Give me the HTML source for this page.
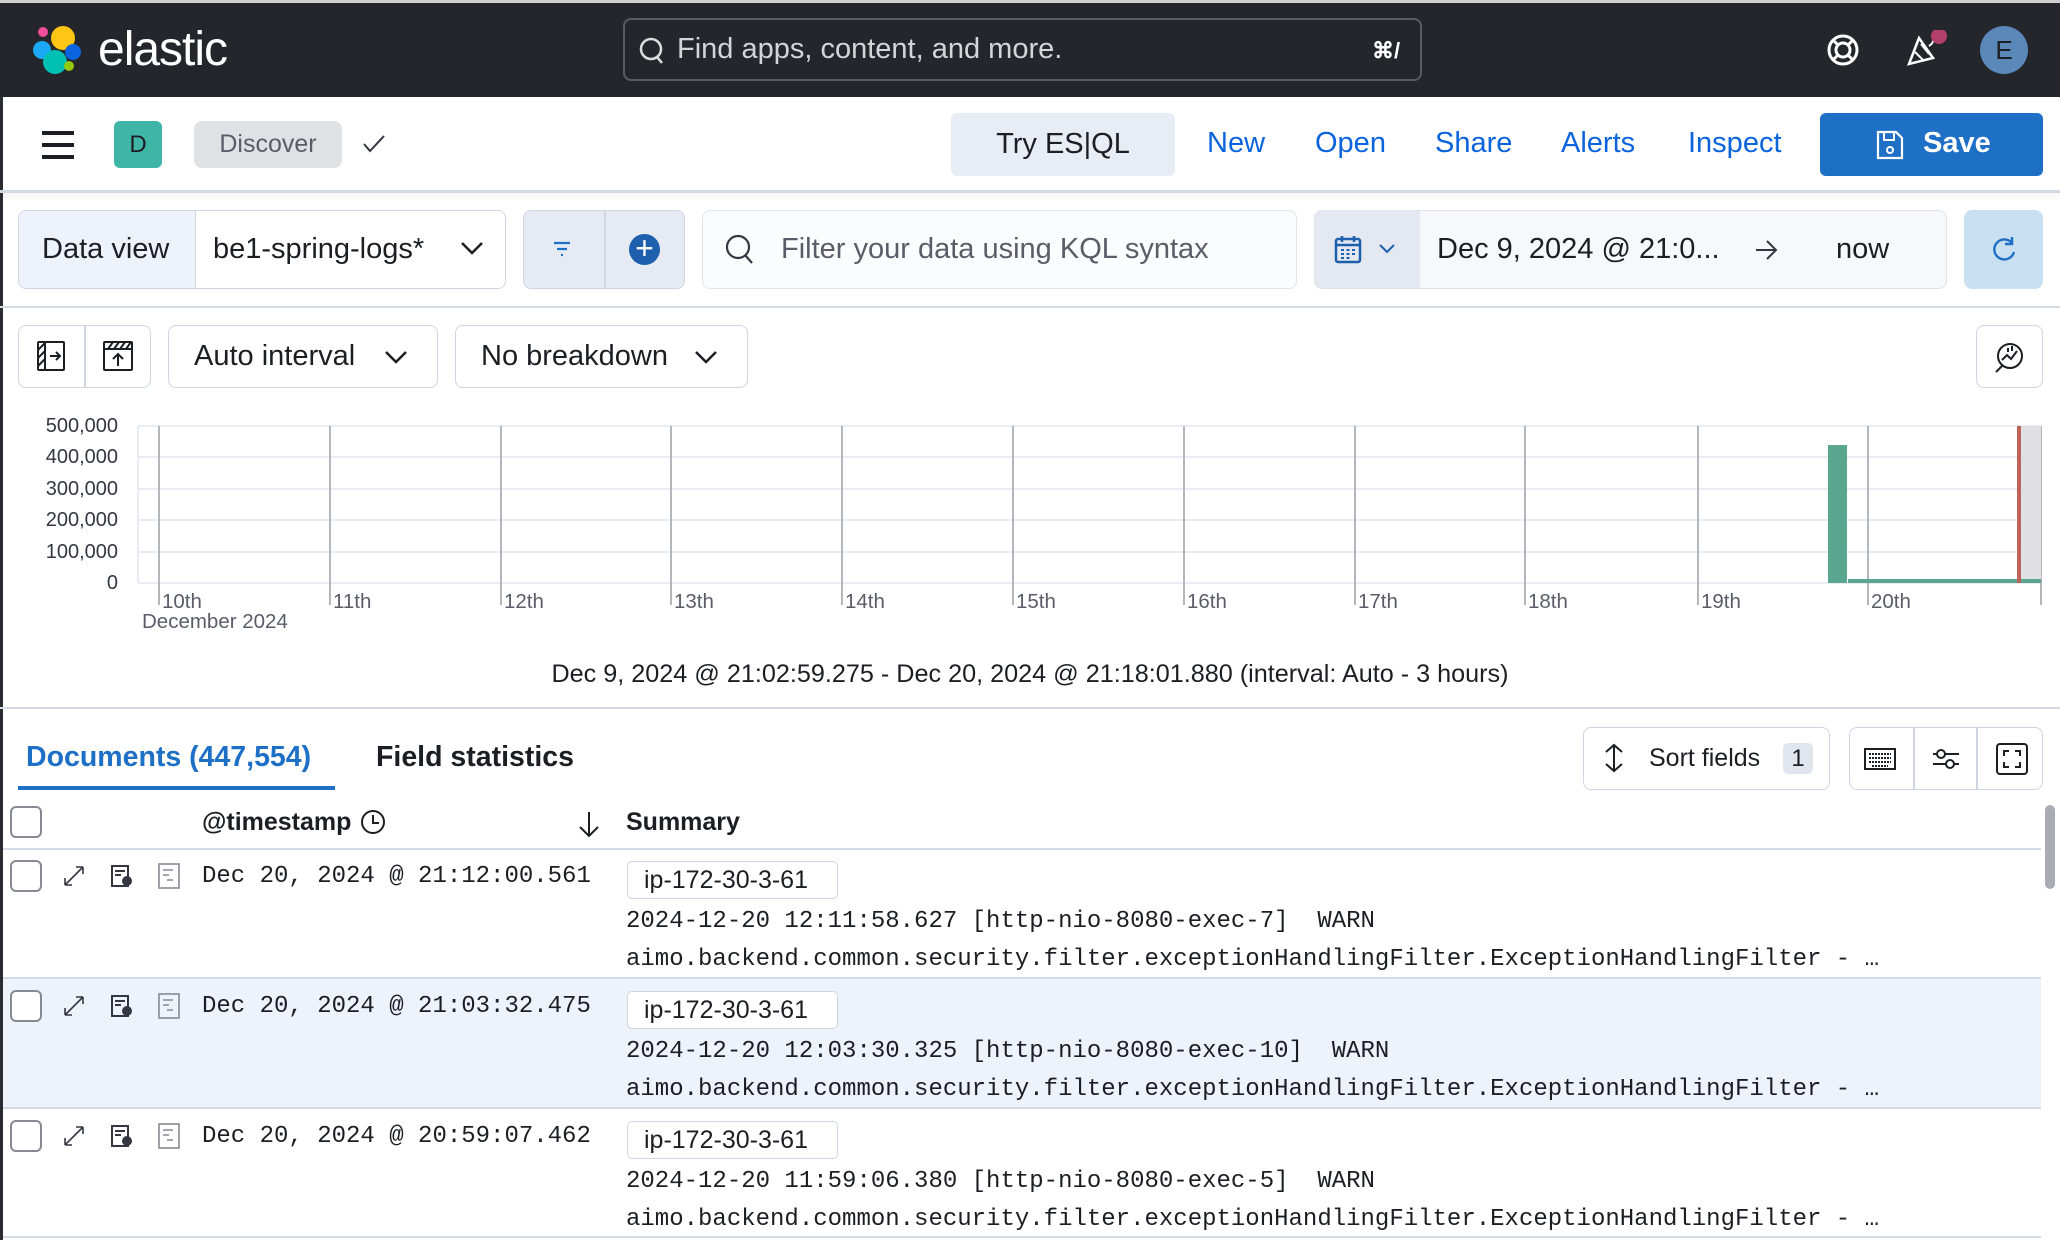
<!DOCTYPE html>
<html><head><meta charset="utf-8"><style>
*{box-sizing:border-box;margin:0;padding:0}
body{width:2060px;height:1240px;overflow:hidden;background:#fff;font-family:"Liberation Sans",sans-serif;color:#1d1e24;position:relative}
.a{position:absolute}
.t{position:absolute;white-space:pre}
.mono{font-family:"Liberation Mono",monospace}
.btn{position:absolute;border:1.5px solid #cfd5e2;border-radius:8px;background:#fff}
</style></head><body>
<!-- header -->
<div class="a" style="left:0;top:0;width:2060px;height:97px;background:#25262c;border-top:3px solid #d0d0d0"></div>
<svg class="a" style="left:33px;top:24px" width="50" height="52" viewBox="0 0 50 52">
<circle cx="30" cy="14" r="12" fill="#fec514"/><circle cx="10" cy="8" r="5" fill="#f04e98"/>
<circle cx="9" cy="26" r="9" fill="#1ba9f5"/><circle cx="40" cy="28" r="8" fill="#0b64dd"/>
<circle cx="22" cy="38" r="12" fill="#00bfb3"/><circle cx="36" cy="42" r="5" fill="#93c90e"/></svg>
<div class="t" style="left:98px;top:22px;font-size:48px;color:#fff;letter-spacing:-1px">elastic</div>
<div class="a" style="left:623px;top:18px;width:799px;height:63px;border:2px solid #5a5c63;border-radius:8px"></div>
<svg class="a" style="left:638px;top:36px" width="28" height="30" viewBox="0 0 28 30"><circle cx="13" cy="13" r="10" stroke="#ddd" stroke-width="2.5" fill="none"/><path d="M19 21l5 6" stroke="#ddd" stroke-width="2.5"/></svg>
<div class="t" style="left:677px;top:33px;font-size:29px;color:#d4d5d9">Find apps, content, and more.</div>
<div class="t" style="left:1372px;top:38px;font-size:22px;color:#fff;font-weight:bold">⌘/</div>
<svg class="a" style="left:1826px;top:33px" width="34" height="34" viewBox="0 0 34 34"><circle cx="17" cy="17" r="14" stroke="#fff" stroke-width="3" fill="none"/><circle cx="17" cy="17" r="7" stroke="#fff" stroke-width="3" fill="none"/><path d="M7 7l5 5M27 7l-5 5M7 27l5-5M27 27l-5-5" stroke="#fff" stroke-width="3"/></svg>
<svg class="a" style="left:1905px;top:30px" width="44" height="40" viewBox="0 0 44 40"><path d="M4 34L14 8l14 20z" stroke="#fff" stroke-width="2.5" fill="none"/><path d="M10 22l8 8M16 14l8 10" stroke="#fff" stroke-width="2"/><path d="M24 16q6-4 4-10" stroke="#fff" stroke-width="2" fill="none"/><circle cx="34" cy="6" r="8" fill="#b2416a"/></svg>
<div class="a" style="left:1980px;top:26px;width:48px;height:48px;border-radius:50%;background:#5a88b8;color:#1d1e24;font-size:26px;text-align:center;line-height:48px">E</div>
<!-- nav bar -->
<div class="a" style="left:0;top:97px;width:3px;height:1143px;background:#2b2c31"></div>
<div class="a" style="left:0;top:190px;width:2060px;height:3px;background:#d3dae6;box-shadow:0 3px 6px rgba(0,0,0,.08)"></div>
<div class="a" style="left:42px;top:131px;width:32px;height:4px;background:#1d1e24;box-shadow:0 12px 0 #1d1e24,0 24px 0 #1d1e24"></div>
<div class="a" style="left:114px;top:121px;width:48px;height:47px;border-radius:6px;background:#3fb5a7;font-size:24px;text-align:center;line-height:47px">D</div>
<div class="a" style="left:194px;top:121px;width:148px;height:47px;border-radius:8px;background:#e0e1e4;color:#5a5d68;font-size:25px;text-align:center;line-height:47px">Discover</div>
<svg class="a" style="left:362px;top:134px" width="24" height="20"><path d="M2 10l6 7L22 2" stroke="#343741" stroke-width="2" fill="none"/></svg>
<div class="a" style="left:951px;top:113px;width:224px;height:63px;border-radius:6px;background:#e8ecf4;font-size:29px;text-align:center;line-height:63px">Try ES|QL</div>
<div class="t" style="left:1207px;top:127px;font-size:29px;color:#0b64dd">New</div>
<div class="t" style="left:1315px;top:127px;font-size:29px;color:#0b64dd">Open</div>
<div class="t" style="left:1435px;top:127px;font-size:29px;color:#0b64dd">Share</div>
<div class="t" style="left:1561px;top:127px;font-size:29px;color:#0b64dd">Alerts</div>
<div class="t" style="left:1688px;top:127px;font-size:29px;color:#0b64dd">Inspect</div>
<div class="a" style="left:1820px;top:113px;width:223px;height:63px;border-radius:6px;background:#1e6fc6"></div>
<svg class="a" style="left:1876px;top:130px" width="28" height="30" viewBox="0 0 28 30"><path d="M2 2h18l6 6v20H2z" stroke="#fff" stroke-width="2.2" fill="none"/><path d="M8 2v8h10V2" stroke="#fff" stroke-width="2" fill="none"/><circle cx="14" cy="20" r="3" stroke="#fff" stroke-width="2" fill="none"/></svg>
<div class="t" style="left:1923px;top:127px;font-size:29px;color:#fff;font-weight:bold">Save</div>
<!-- query row -->
<div class="btn" style="left:18px;top:210px;width:488px;height:79px;overflow:hidden"><div class="a" style="left:0;top:0;width:177px;height:100%;background:#eef2fa;border-right:1.5px solid #cfd5e2"></div></div>
<div class="t" style="left:42px;top:233px;font-size:29px">Data view</div>
<div class="t" style="left:213px;top:233px;font-size:29px">be1-spring-logs*</div>
<svg class="a" style="left:460px;top:240px" width="24" height="16"><path d="M2 3l10 10L22 3" stroke="#1d1e24" stroke-width="2.5" fill="none"/></svg>
<div class="btn" style="left:523px;top:210px;width:162px;height:79px;background:#e6ebf3"><div class="a" style="left:80px;top:0;width:1.5px;height:100%;background:#cfd5e2"></div></div>
<svg class="a" style="left:552px;top:240px" width="22" height="18"><path d="M2 3h16M5 9h10M9 15h2" stroke="#1e6fc6" stroke-width="2.2"/></svg>
<div class="a" style="left:629px;top:234px;width:31px;height:31px;border-radius:50%;background:#1e5fae"></div>
<div class="t" style="left:629px;top:229px;width:31px;text-align:center;font-size:32px;color:#fff;line-height:38px">+</div>
<div class="btn" style="left:702px;top:210px;width:595px;height:79px;background:#fbfcfd;border-color:#e0e4ec"></div>
<svg class="a" style="left:724px;top:233px" width="32" height="34"><circle cx="14" cy="14" r="11" stroke="#343741" stroke-width="2.2" fill="none"/><path d="M21 22l7 8" stroke="#343741" stroke-width="2.2"/></svg>
<div class="t" style="left:781px;top:233px;font-size:29px;color:#5a5d68">Filter your data using KQL syntax</div>
<div class="btn" style="left:1314px;top:210px;width:633px;height:79px;background:#f7f8fc;border-color:#dfe3ea;overflow:hidden"><div class="a" style="left:0;top:0;width:105px;height:100%;background:#e3e8f1"></div></div>
<svg class="a" style="left:1334px;top:234px" width="28" height="30" viewBox="0 0 28 30"><rect x="2" y="5" width="24" height="23" rx="2" stroke="#1e5fae" stroke-width="2.5" fill="none"/><path d="M2 11h24M8 2v6M20 2v6" stroke="#1e5fae" stroke-width="2.5"/><path d="M7 16h3M12.5 16h3M18 16h3M7 20h3M12.5 20h3M18 20h3M7 24h3M12.5 24h3" stroke="#1e5fae" stroke-width="2"/></svg>
<svg class="a" style="left:1378px;top:243px" width="18" height="12"><path d="M2 2l7 7 7-7" stroke="#1e5fae" stroke-width="2" fill="none"/></svg>
<div class="t" style="left:1437px;top:233px;font-size:29px">Dec 9, 2024 @ 21:0...</div>
<svg class="a" style="left:1754px;top:238px" width="26" height="24"><path d="M2 12h20M13 3l9 9-9 9" stroke="#343741" stroke-width="2" fill="none"/></svg>
<div class="t" style="left:1836px;top:233px;font-size:29px">now</div>
<div class="a" style="left:1964px;top:210px;width:79px;height:79px;border-radius:8px;background:#c9dff2"></div>
<svg class="a" style="left:1990px;top:235px" width="28" height="30" viewBox="0 0 28 30"><path d="M22 8A10 10 0 1 0 24 17" stroke="#1e6fc6" stroke-width="2.4" fill="none"/><path d="M22 2v7h-7" stroke="#1e6fc6" stroke-width="2.4" fill="none"/></svg>
<div class="a" style="left:0;top:306px;width:2060px;height:2px;background:#d3dae6"></div>
<!-- chart controls -->
<div class="btn" style="left:18px;top:325px;width:133px;height:63px"><div class="a" style="left:65px;top:0;width:1.5px;height:100%;background:#cfd5e2"></div></div>
<svg class="a" style="left:36px;top:340px" width="32" height="32" viewBox="0 0 32 32"><rect x="2" y="2" width="26" height="28" rx="1" stroke="#1d1e24" stroke-width="2" fill="none"/><path d="M9 2v28M2 10l7-7M2 18l7-7M2 26l7-7M14 16h10M20 12l4 4-4 4" stroke="#1d1e24" stroke-width="2" fill="none"/></svg>
<svg class="a" style="left:102px;top:340px" width="32" height="32" viewBox="0 0 32 32"><rect x="2" y="2" width="28" height="28" rx="1" stroke="#1d1e24" stroke-width="2" fill="none"/><path d="M2 9h28M6 9l5-7M12 9l5-7M18 9l5-7M24 9l5-7M16 26V14M11 19l5-5 5 5" stroke="#1d1e24" stroke-width="2" fill="none"/></svg>
<div class="btn" style="left:168px;top:325px;width:270px;height:63px"></div>
<div class="t" style="left:194px;top:340px;font-size:29px">Auto interval</div>
<svg class="a" style="left:384px;top:349px" width="24" height="16"><path d="M2 3l10 10L22 3" stroke="#1d1e24" stroke-width="2.5" fill="none"/></svg>
<div class="btn" style="left:455px;top:325px;width:293px;height:63px"></div>
<div class="t" style="left:481px;top:340px;font-size:29px">No breakdown</div>
<svg class="a" style="left:694px;top:349px" width="24" height="16"><path d="M2 3l10 10L22 3" stroke="#1d1e24" stroke-width="2.5" fill="none"/></svg>
<div class="btn" style="left:1976px;top:325px;width:67px;height:63px"></div>
<svg class="a" style="left:1994px;top:340px" width="32" height="34" viewBox="0 0 32 34"><circle cx="16" cy="16" r="12" stroke="#1d1e24" stroke-width="2" fill="none"/><path d="M8 20l5-5 4 4 6-8M14 8v4M18 6v5M2 32l6-6" stroke="#1d1e24" stroke-width="2" fill="none"/></svg>
<!-- chart -->
<svg class="a" style="left:0;top:405px" width="2060" height="230">
<g font-family="Liberation Sans" font-size="20" fill="#343741" text-anchor="end">
<text x="118" y="27">500,000</text><text x="118" y="58">400,000</text><text x="118" y="90">300,000</text><text x="118" y="121">200,000</text><text x="118" y="153">100,000</text><text x="118" y="184">0</text></g>
<g stroke="#e9edf3" stroke-width="2"><path d="M138 21H2041M138 52H2041M138 84H2041M138 115H2041M138 147H2041M138 178H2041"/></g>
<path d="M138 21V178" stroke="#e9edf3" stroke-width="2"/>
<g stroke="#b4b6bb" stroke-width="2"><path d="M159 21V200M330 21V200M501 21V200M671 21V200M842 21V200M1013 21V200M1184 21V200M1355 21V200M1525 21V200M1698 21V200M1868 21V200M2041 21V200"/></g>
<g font-family="Liberation Sans" font-size="20.5" fill="#5a5d68">
<text x="162" y="203">10th</text><text x="333" y="203">11th</text><text x="504" y="203">12th</text><text x="674" y="203">13th</text><text x="845" y="203">14th</text><text x="1016" y="203">15th</text><text x="1187" y="203">16th</text><text x="1358" y="203">17th</text><text x="1528" y="203">18th</text><text x="1701" y="203">19th</text><text x="1871" y="203">20th</text>
<text x="142" y="223">December 2024</text></g>
<rect x="2020" y="21" width="21" height="157" fill="#e0e0e3"/>
<rect x="1828" y="40" width="19" height="138" fill="#5aa68f"/>
<rect x="1848" y="174" width="193" height="4" fill="#5aa68f"/>
<rect x="2017" y="21" width="4" height="157" fill="#bf625a"/>
</svg>
<div class="t" style="left:0;top:660px;width:2060px;text-align:center;font-size:25.2px;color:#1d1e24">Dec 9, 2024 @ 21:02:59.275 - Dec 20, 2024 @ 21:18:01.880 (interval: Auto - 3 hours)</div>
<div class="a" style="left:0;top:707px;width:2060px;height:2px;background:#d3dae6"></div>
<!-- tabs -->
<div class="t" style="left:26px;top:741px;font-size:28.5px;font-weight:bold;color:#1e6fc6">Documents (447,554)</div>
<div class="a" style="left:18px;top:786px;width:317px;height:4px;background:#1e6fc6"></div>
<div class="t" style="left:376px;top:741px;font-size:28.5px;font-weight:bold">Field statistics</div>
<div class="btn" style="left:1583px;top:727px;width:247px;height:63px"></div>
<svg class="a" style="left:1603px;top:743px" width="22" height="30"><path d="M11 2v26M3 9l8-7 8 7M3 21l8 7 8-7" stroke="#1d1e24" stroke-width="2" fill="none"/></svg>
<div class="t" style="left:1649px;top:744px;font-size:25px">Sort fields</div>
<div class="a" style="left:1783px;top:743px;width:30px;height:31px;border-radius:5px;background:#e0e5ee;font-size:24px;text-align:center;line-height:31px">1</div>
<div class="btn" style="left:1849px;top:727px;width:194px;height:63px"><div class="a" style="left:63px;top:0;width:1.5px;height:100%;background:#cfd5e2"></div><div class="a" style="left:126px;top:0;width:1.5px;height:100%;background:#cfd5e2"></div></div>
<svg class="a" style="left:1864px;top:748px" width="32" height="22"><rect x="1" y="1" width="30" height="20" stroke="#1d1e24" stroke-width="2" fill="none"/><path d="M5 6h22M5 10h22M5 14h22M8 18h16" stroke="#1d1e24" stroke-width="2" stroke-dasharray="2 1"/></svg>
<svg class="a" style="left:1931px;top:746px" width="30" height="26"><path d="M2 8h26M2 18h26" stroke="#1d1e24" stroke-width="2"/><circle cx="10" cy="8" r="4" fill="#fff" stroke="#1d1e24" stroke-width="2"/><circle cx="19" cy="18" r="4" fill="#fff" stroke="#1d1e24" stroke-width="2"/></svg>
<svg class="a" style="left:1996px;top:743px" width="32" height="32"><rect x="1" y="1" width="30" height="30" rx="3" stroke="#1d1e24" stroke-width="2" fill="none"/><path d="M8 13V8h5M19 8h5v5M24 19v5h-5M13 24H8v-5" stroke="#1d1e24" stroke-width="2" fill="none"/></svg>
<!-- table header -->
<div class="a" style="left:10px;top:806px;width:32px;height:32px;border:2px solid #878a93;border-radius:6px"></div>
<div class="t" style="left:202px;top:808px;font-size:25px;font-weight:bold">@timestamp</div>
<svg class="a" style="left:360px;top:809px" width="26" height="26"><circle cx="13" cy="13" r="11" stroke="#1d1e24" stroke-width="2" fill="none"/><path d="M13 6v8h6" stroke="#1d1e24" stroke-width="2" fill="none"/></svg>
<svg class="a" style="left:577px;top:810px" width="24" height="28"><path d="M12 2v24M3 17l9 9 9-9" stroke="#1d1e24" stroke-width="2" fill="none"/></svg>
<div class="t" style="left:626px;top:808px;font-size:25px;font-weight:bold">Summary</div>
<div class="a" style="left:3px;top:848px;width:2038px;height:2px;background:#d3dae6"></div>
<div class="a" style="left:2045px;top:805px;width:10px;height:84px;border-radius:5px;background:#a9acb3"></div>
<!-- rows -->
<div class="a" style="left:3px;top:979px;width:2038px;height:130px;background:#eef2fa"></div>
<div class="a" style="left:3px;top:977px;width:2038px;height:2px;background:#d3dae6"></div>
<div class="a" style="left:3px;top:1107px;width:2038px;height:2px;background:#d3dae6"></div>
<div class="a" style="left:3px;top:1236px;width:2038px;height:2px;background:#d3dae6"></div>
<!-- row 1 -->
<div class="a" style="left:10px;top:860px;width:32px;height:32px;border:2px solid #878a93;border-radius:6px;background:#fff"></div>
<svg class="a" style="left:62px;top:864px" width="24" height="24"><path d="M3 21L21 3M3 21v-7M3 21h7M21 3h-7M21 3v7" stroke="#343741" stroke-width="1.6" fill="none"/></svg>
<svg class="a" style="left:110px;top:864px" width="24" height="24"><rect x="2" y="2" width="16" height="20" stroke="#343741" stroke-width="2" fill="none"/><path d="M5 7h10M5 11h6" stroke="#343741" stroke-width="2"/><circle cx="17" cy="17" r="5" fill="#343741"/></svg>
<svg class="a" style="left:157px;top:863px" width="24" height="26"><rect x="2" y="1" width="20" height="24" stroke="#878a93" stroke-width="1.6" fill="none"/><path d="M6 7h10M6 12h6M10 17h6" stroke="#878a93" stroke-width="1.5"/></svg>
<div class="t mono" style="left:202px;top:863px;font-size:24px">Dec 20, 2024 @ 21:12:00.561</div>
<div class="a" style="left:627px;top:861px;width:211px;height:38px;border:1.5px solid #cfd5e2;border-radius:5px;background:#fff;font-size:25px;padding-left:16px;line-height:36px">ip-172-30-3-61</div>
<div class="t mono" style="left:626px;top:903px;font-size:24px;line-height:38px">2024-12-20 12:11:58.627 [http-nio-8080-exec-7]  WARN
aimo.backend.common.security.filter.exceptionHandlingFilter.ExceptionHandlingFilter - …</div>
<!-- row 2 -->
<div class="a" style="left:10px;top:990px;width:32px;height:32px;border:2px solid #878a93;border-radius:6px;background:#fff"></div>
<svg class="a" style="left:62px;top:994px" width="24" height="24"><path d="M3 21L21 3M3 21v-7M3 21h7M21 3h-7M21 3v7" stroke="#343741" stroke-width="1.6" fill="none"/></svg>
<svg class="a" style="left:110px;top:994px" width="24" height="24"><rect x="2" y="2" width="16" height="20" stroke="#343741" stroke-width="2" fill="none"/><path d="M5 7h10M5 11h6" stroke="#343741" stroke-width="2"/><circle cx="17" cy="17" r="5" fill="#343741"/></svg>
<svg class="a" style="left:157px;top:993px" width="24" height="26"><rect x="2" y="1" width="20" height="24" stroke="#878a93" stroke-width="1.6" fill="none"/><path d="M6 7h10M6 12h6M10 17h6" stroke="#878a93" stroke-width="1.5"/></svg>
<div class="t mono" style="left:202px;top:993px;font-size:24px">Dec 20, 2024 @ 21:03:32.475</div>
<div class="a" style="left:627px;top:991px;width:211px;height:38px;border:1.5px solid #cfd5e2;border-radius:5px;background:#fff;font-size:25px;padding-left:16px;line-height:36px">ip-172-30-3-61</div>
<div class="t mono" style="left:626px;top:1033px;font-size:24px;line-height:38px">2024-12-20 12:03:30.325 [http-nio-8080-exec-10]  WARN
aimo.backend.common.security.filter.exceptionHandlingFilter.ExceptionHandlingFilter - …</div>
<!-- row 3 -->
<div class="a" style="left:10px;top:1120px;width:32px;height:32px;border:2px solid #878a93;border-radius:6px;background:#fff"></div>
<svg class="a" style="left:62px;top:1124px" width="24" height="24"><path d="M3 21L21 3M3 21v-7M3 21h7M21 3h-7M21 3v7" stroke="#343741" stroke-width="1.6" fill="none"/></svg>
<svg class="a" style="left:110px;top:1124px" width="24" height="24"><rect x="2" y="2" width="16" height="20" stroke="#343741" stroke-width="2" fill="none"/><path d="M5 7h10M5 11h6" stroke="#343741" stroke-width="2"/><circle cx="17" cy="17" r="5" fill="#343741"/></svg>
<svg class="a" style="left:157px;top:1123px" width="24" height="26"><rect x="2" y="1" width="20" height="24" stroke="#878a93" stroke-width="1.6" fill="none"/><path d="M6 7h10M6 12h6M10 17h6" stroke="#878a93" stroke-width="1.5"/></svg>
<div class="t mono" style="left:202px;top:1123px;font-size:24px">Dec 20, 2024 @ 20:59:07.462</div>
<div class="a" style="left:627px;top:1121px;width:211px;height:38px;border:1.5px solid #cfd5e2;border-radius:5px;background:#fff;font-size:25px;padding-left:16px;line-height:36px">ip-172-30-3-61</div>
<div class="t mono" style="left:626px;top:1163px;font-size:24px;line-height:38px">2024-12-20 11:59:06.380 [http-nio-8080-exec-5]  WARN
aimo.backend.common.security.filter.exceptionHandlingFilter.ExceptionHandlingFilter - …</div>
</body></html>
